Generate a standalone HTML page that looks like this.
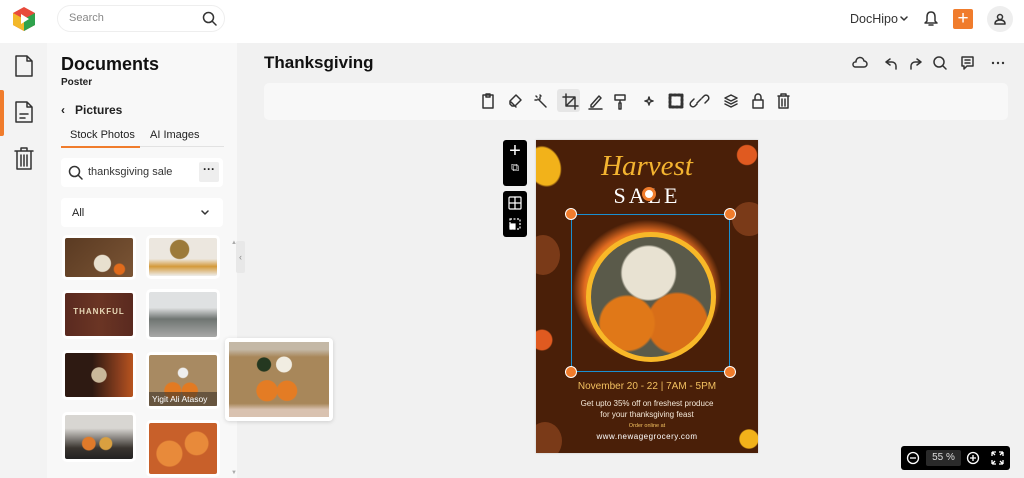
<!DOCTYPE html>
<html><head><meta charset="utf-8"><style>
*{box-sizing:border-box;margin:0;padding:0}
body{width:1024px;height:478px;overflow:hidden;background:#f1f1f1;font-family:"Liberation Sans",sans-serif;position:relative;color:#222}
.a{position:absolute}
.ic{stroke:#333;fill:none;stroke-width:1.5;stroke-linecap:round;stroke-linejoin:round}
.card{position:absolute;background:#fff;border-radius:5px;padding:3px}
.card div{width:100%;height:100%;border-radius:2px}
</style></head><body>
<div class="a" style="left:0;top:0;width:1024px;height:43px;background:#fff"></div>
<svg class="a" style="left:11px;top:6px" width="26" height="26" viewBox="0 0 26 26"><path d="M13 1 L24 7 L24 19 L13 25 L2 19 L2 7Z" fill="#e84a3b"/><path d="M2 7 L13 13 L13 25 L2 19Z" fill="#f3b82a"/><path d="M13 13 L24 7 L24 19 L13 25Z" fill="#2fa24c"/><path d="M10 8 L18 13 L10 18Z" fill="#fff"/></svg>
<div class="a" style="left:57px;top:5px;width:168px;height:27px;border:1px solid #eee;border-radius:14px"></div>
<div class="a" style="left:69px;top:12px;font-size:11px;color:#888">Search</div>
<svg class="a" style="left:202px;top:11px" width="15" height="15" viewBox="0 0 15 15"><circle cx="6.5" cy="6.5" r="5" class="ic"/><path d="M10 10l4 4" class="ic"/></svg>
<div class="a" style="left:850px;top:12px;font-size:12.5px;color:#333">DocHipo</div>
<svg class="a" style="left:900px;top:16px" width="8" height="6"><path d="M1 1l3 3 3-3" class="ic"/></svg>
<svg class="a" style="left:924px;top:10px" width="14" height="17" viewBox="0 0 14 17"><path d="M7 2c-3 0-4 2-4 5v4l-2 2h12l-2-2V7c0-3-1-5-4-5zM5 15h4" class="ic"/></svg>
<div class="a" style="left:953px;top:9px;width:20px;height:20px;background:#f07c2c;border-radius:2px;color:#fff;font-size:19px;line-height:19px;text-align:center">+</div>
<div class="a" style="left:987px;top:6px;width:26px;height:26px;background:#eee;border-radius:50%"></div>
<svg class="a" style="left:993px;top:12px" width="14" height="14" viewBox="0 0 14 14"><circle cx="7" cy="5" r="2.5" class="ic"/><path d="M2 12c0-3 2-4 5-4s5 1 5 4z" class="ic"/></svg>
<div class="a" style="left:0;top:43px;width:47px;height:435px;background:#f3f3f3"></div>
<div class="a" style="left:0;top:90px;width:4px;height:46px;background:#f07c2c;border-radius:0 2px 2px 0"></div>
<svg class="a" style="left:13px;top:54px" width="22" height="24" viewBox="0 0 22 24"><path d="M3 2h11l5 5v15H3z M14 2v5h5" class="ic" stroke="#222" stroke-width="2"/></svg>
<svg class="a" style="left:13px;top:100px" width="22" height="24" viewBox="0 0 22 24"><path d="M3 2h11l5 5v15H3z M14 2v5h5 M7 14h8 M7 18h5" class="ic" stroke="#222" stroke-width="2"/></svg>
<svg class="a" style="left:13px;top:146px" width="22" height="25" viewBox="0 0 22 25"><path d="M2 5h18 M8 5V2h6v3 M4 5v18h14V5 M8 9v11 M11 9v11 M14 9v11" class="ic" stroke="#222" stroke-width="2"/></svg>
<div class="a" style="left:47px;top:43px;width:190px;height:435px;background:#f8f8f8"></div>
<div class="a" style="left:61px;top:54px;font-size:18px;font-weight:bold;color:#111">Documents</div>
<div class="a" style="left:61px;top:77px;font-size:10px;font-weight:bold">Poster</div>
<div class="a" style="left:61px;top:103px;font-size:12px;font-weight:bold">‹&nbsp;&nbsp; Pictures</div>
<div class="a" style="left:70px;top:129px;font-size:11px">Stock Photos</div>
<div class="a" style="left:150px;top:129px;font-size:11px">AI Images</div>
<div class="a" style="left:61px;top:146px;width:163px;height:1px;background:#e2e2e2"></div>
<div class="a" style="left:61px;top:146px;width:79px;height:2px;background:#f07c2c"></div>
<div class="a" style="left:61px;top:158px;width:162px;height:29px;background:#fff;border-radius:4px"></div>
<svg class="a" style="left:68px;top:165px" width="15" height="15"><circle cx="6.5" cy="6.5" r="5" class="ic" stroke="#888"/><path d="M10 10l4 4" class="ic" stroke="#888"/></svg>
<div class="a" style="left:88px;top:166px;font-size:11px;color:#333">thanksgiving sale</div>
<div class="a" style="left:199px;top:162px;width:20px;height:20px;background:#eee;border-radius:2px;text-align:center;font-size:12px;line-height:14px;font-weight:bold">···</div>
<div class="a" style="left:61px;top:198px;width:162px;height:29px;background:#fff;border-radius:4px"></div>
<div class="a" style="left:72px;top:207px;font-size:11px">All</div>
<svg class="a" style="left:201px;top:210px" width="8" height="6"><path d="M1 1l3 3 3-3" class="ic"/></svg>
<div class="a" style="left:231px;top:240px;font-size:6px;color:#aaa">▲</div>
<div class="a" style="left:231px;top:470px;font-size:6px;color:#aaa">▼</div>
<div class="a" style="left:236px;top:241px;width:9px;height:32px;background:#e8e8e8;border-radius:2px;font-size:9px;color:#888;line-height:32px;text-align:center">‹</div>
<div class="card" style="left:62px;top:235px;width:74px;height:45px"><div style="background:radial-gradient(circle at 55% 65%,#e8e0cf 0 18%,transparent 20%),radial-gradient(circle at 80% 80%,#e06b1c 0 8%,transparent 10%),linear-gradient(135deg,#5a3a22,#7b5535)"></div></div>
<div class="card" style="left:146px;top:235px;width:74px;height:44px"><div style="background:radial-gradient(circle at 45% 30%,#9c7a3a 0 20%,transparent 22%),linear-gradient(180deg,#ece7df 55%,#d49a3a 75%,#eee 100%)"></div></div>
<div class="card" style="left:62px;top:290px;width:74px;height:49px"><div style="background:linear-gradient(90deg,#5a2a20,#6b3524,#5a2a20)"><span style="display:block;color:#e8d9b8;font-size:8px;font-weight:bold;text-align:center;padding-top:14px;letter-spacing:1px">THANKFUL</span></div></div>
<div class="card" style="left:146px;top:289px;width:74px;height:51px"><div style="background:linear-gradient(180deg,#dfe1e2 35%,#6f7572 60%,#a8a8a8)"></div></div>
<div class="card" style="left:62px;top:350px;width:74px;height:50px"><div style="background:radial-gradient(circle at 50% 50%,#c9b89a 0 18%,transparent 20%),linear-gradient(90deg,#2e1a12 40%,#8b3f1e 80%,#b8541e)"></div></div>
<div class="card" style="left:146px;top:352px;width:74px;height:57px"><div style="background:radial-gradient(circle at 35% 70%,#e27a22 0 14%,transparent 16%),radial-gradient(circle at 60% 70%,#e27a22 0 14%,transparent 16%),radial-gradient(circle at 50% 35%,#eee 0 10%,transparent 12%),#a88a62;position:relative"><span style="position:absolute;left:0;bottom:0;width:100%;background:rgba(60,50,40,.6);color:#fff;font-size:8.5px;padding:2px 3px">Yigit Ali Atasoy</span></div></div>
<div class="card" style="left:62px;top:412px;width:74px;height:50px"><div style="background:radial-gradient(circle at 35% 65%,#e07a2a 0 12%,transparent 14%),radial-gradient(circle at 60% 65%,#d9a040 0 12%,transparent 14%),linear-gradient(180deg,#d8d6d2 30%,#3a3530 75%,#222)"></div></div>
<div class="card" style="left:146px;top:420px;width:74px;height:57px"><div style="background:radial-gradient(circle at 30% 60%,#e88a3a 0 22%,transparent 24%),radial-gradient(circle at 70% 40%,#e88a3a 0 20%,transparent 22%),#c8602a"></div></div>
<div class="a" style="left:225px;top:338px;width:108px;height:83px;background:#fff;border-radius:4px;box-shadow:0 1px 4px rgba(0,0,0,.15);padding:4px"><div style="width:100%;height:100%;background:radial-gradient(circle at 38% 65%,#e47c24 0 13%,transparent 14%),radial-gradient(circle at 58% 65%,#e47c24 0 13%,transparent 14%),radial-gradient(circle at 55% 30%,#f1ede2 0 10%,transparent 11%),radial-gradient(circle at 35% 30%,#243820 0 8%,transparent 9%),linear-gradient(180deg,#c4b8a6 10%,#a8875a 20%,#a8875a 82%,#d9c2b0 90%)"></div></div>
<div class="a" style="left:264px;top:53px;font-size:17px;font-weight:bold;color:#111">Thanksgiving</div>
<svg class="a" style="left:850px;top:55px" width="160" height="16" viewBox="0 0 160 16">
<path d="M5 12h9a3 3 0 0 0 0-6 4 4 0 0 0-8 1 2.5 2.5 0 0 0-1 5z" class="ic" stroke="#888"/>
<path d="M40 4l-4 3 4 3 M36 7h6a4 4 0 0 1 4 4v3" class="ic"/>
<path d="M67 4l4 3-4 3 M71 7h-6a4 4 0 0 0-4 4v3" class="ic" stroke="#bbb"/>
<circle cx="89" cy="7" r="5" class="ic"/><path d="M93 11l3 3" class="ic"/>
<path d="M112 2h11v9h-6l-3 3v-3h-2z M115 5h5 M115 8h5" class="ic"/>
<circle cx="143" cy="8" r="1.2" fill="#333"/><circle cx="148" cy="8" r="1.2" fill="#333"/><circle cx="153" cy="8" r="1.2" fill="#333"/>
</svg>
<div class="a" style="left:264px;top:83px;width:744px;height:37px;background:#f8f8f8;border-radius:5px"></div>
<div class="a" style="left:557px;top:89px;width:23px;height:23px;background:#e6e6e6;border-radius:3px"></div>
<svg class="a" style="left:480px;top:92px" width="316" height="18" viewBox="0 0 316 18">
<g class="ic" stroke-width="1.3">
<path d="M3 3h10v13H3z M6 2h4v3H6z"/>
<path d="M30 9l6-6 5 5-6 6h-3l-2-2z M31 10l5 5"/>
<path d="M56 4l1 1 M60 3l1 1 M58 7l8 8 M55 8h2 M60 7v-2"/>
<path d="M86 2v12h12 M83 5h12v12 M86 14l9-9"/>
<path d="M111 13l8-9 2 2-8 9h-2z M109 17h13"/>
<path d="M135 3h10v5h-10z M140 8v3 M139 11h2v6h-2z"/>
<path d="M169 5l1 3 3 1-3 1-1 3-1-3-3-1 3-1z" stroke-dasharray="1 1"/>
<path d="M190 3h12v12h-12z" stroke-dasharray="2 2" stroke-width="3"/>
<path d="M217 12l-2 2a2.5 2.5 0 0 1-4-4l3-3 M222 6l2-2a2.5 2.5 0 0 1 4 4l-3 3 M217 11l4-4"/>
<path d="M245 6l6-3 6 3-6 3z M245 9l6 3 6-3 M245 12l6 3 6-3"/>
<path d="M273 8h10v8h-10z M275 8V5a3 3 0 0 1 6 0v3"/>
<path d="M298 4h11 M301 4V2h5v2 M299 4v12h9V4 M302 7v7 M305 7v7"/>
</g></svg>
<div class="a" style="left:503px;top:140px;width:24px;height:46px;background:#000;border-radius:3px;color:#fff;text-align:center"><div style="font-size:20px;line-height:22px">+</div><div style="font-size:11px">⧉</div></div>
<div class="a" style="left:503px;top:191px;width:24px;height:46px;background:#000;border-radius:3px"></div>
<svg class="a" style="left:508px;top:196px" width="14" height="36"><g fill="none" stroke="#fff" stroke-width="1.2"><rect x="1" y="1" width="12" height="12" rx="1"/><path d="M7 1v12 M1 7h12"/><rect x="2" y="23" width="10" height="10" stroke-dasharray="2 1.5"/><rect x="2" y="28" width="5" height="5" fill="#fff"/></g></svg>
<div class="a" style="left:536px;top:140px;width:222px;height:313px;background:#4a1f08;overflow:hidden;box-shadow:0 0 2px rgba(0,0,0,.2)">
 <div class="a" style="left:-8px;top:-5px;width:40px;height:60px;background:radial-gradient(ellipse at 40% 50%,#f2b21a 0 45%,transparent 50%);transform:rotate(-20deg)"></div>
 <div class="a" style="left:196px;top:0;width:30px;height:30px;background:radial-gradient(circle,#e05a20 0 45%,transparent 50%)"></div>
 <div class="a" style="left:-10px;top:95px;width:34px;height:40px;background:#7a3a18;border-radius:50%"></div>
 <div class="a" style="left:196px;top:62px;width:34px;height:34px;background:#7a3a18;border-radius:50%"></div>
 <div class="a" style="left:-8px;top:180px;width:28px;height:40px;background:radial-gradient(circle,#e05a20 0 40%,transparent 45%)"></div>
 <div class="a" style="left:-8px;top:282px;width:34px;height:38px;background:#7a3a18;border-radius:50%"></div>
 <div class="a" style="left:198px;top:282px;width:30px;height:34px;background:radial-gradient(circle,#f2b21a 0 40%,transparent 45%)"></div>
 <div class="a" style="left:0;top:10px;width:222px;text-align:center;font-family:'Liberation Serif',serif;font-style:italic;font-size:29px;color:#f4b430">Harvest</div>
 <div class="a" style="left:0;top:43px;width:222px;text-align:center;font-family:'Liberation Serif',serif;font-size:22px;color:#fff;letter-spacing:3px">SALE</div>
 <div class="a" style="left:106px;top:47px;width:14px;height:14px;background:#fff;border-radius:50%;border:3px solid #f07c2c"></div>
 <div class="a" style="left:26px;top:70px;width:170px;height:160px;background:radial-gradient(ellipse,#f0c020 0 42%,#e06a20 52%,transparent 62%)"></div>
 <div class="a" style="left:50px;top:92px;width:130px;height:130px;border-radius:50%;background:#f8b828"></div>
 <div class="a" style="left:55px;top:97px;width:120px;height:120px;border-radius:50%;background:radial-gradient(circle at 48% 30%,#e8e2d2 0 25%,transparent 27%),radial-gradient(circle at 30% 72%,#e07818 0 22%,transparent 24%),radial-gradient(circle at 72% 72%,#d86e18 0 24%,transparent 26%),#5a5a4a"></div>
 <div class="a" style="left:0;top:241px;width:222px;text-align:center;font-size:10px;color:#f2c060">November 20 - 22 | 7AM - 5PM</div>
 <div class="a" style="left:0;top:258px;width:222px;text-align:center;font-size:8px;color:#f4e8d8;line-height:11px">Get upto 35% off on freshest produce<br>for your thanksgiving feast</div>
 <div class="a" style="left:0;top:283px;width:222px;text-align:center;font-size:5.5px;color:#f2c060">Order online at</div>
 <div class="a" style="left:0;top:292px;width:222px;text-align:center;font-size:8px;color:#fff;letter-spacing:.5px">www.newagegrocery.com</div>
</div>
<div class="a" style="left:571px;top:214px;width:159px;height:158px;border:1px solid #1a8fd0"></div>
<div class="a" style="left:565px;top:208px;width:12px;height:12px;border-radius:50%;background:#f07c2c;border:1.5px solid #fff"></div>
<div class="a" style="left:724px;top:208px;width:12px;height:12px;border-radius:50%;background:#f07c2c;border:1.5px solid #fff"></div>
<div class="a" style="left:565px;top:366px;width:12px;height:12px;border-radius:50%;background:#f07c2c;border:1.5px solid #fff"></div>
<div class="a" style="left:724px;top:366px;width:12px;height:12px;border-radius:50%;background:#f07c2c;border:1.5px solid #fff"></div>
<div class="a" style="left:901px;top:446px;width:109px;height:24px;background:#000;border-radius:3px"></div>
<div class="a" style="left:926px;top:450px;width:35px;height:16px;background:#2a2a2a;border-radius:2px;color:#ddd;font-size:10px;line-height:16px;text-align:center">55 %</div>
<svg class="a" style="left:906px;top:451px" width="100" height="14"><g fill="none" stroke="#fff" stroke-width="1.3"><circle cx="7" cy="7" r="5.5"/><path d="M4 7h6"/><circle cx="67" cy="7" r="5.5"/><path d="M64 7h6 M67 4v6"/><path d="M86 1h4 M86 1v4 M86 1l3 3 M97 1h-4 M97 1v4 M97 1l-3 3 M86 13h4 M86 13v-4 M86 13l3-3 M97 13h-4 M97 13v-4 M97 13l-3-3"/></g></svg>
</body></html>
